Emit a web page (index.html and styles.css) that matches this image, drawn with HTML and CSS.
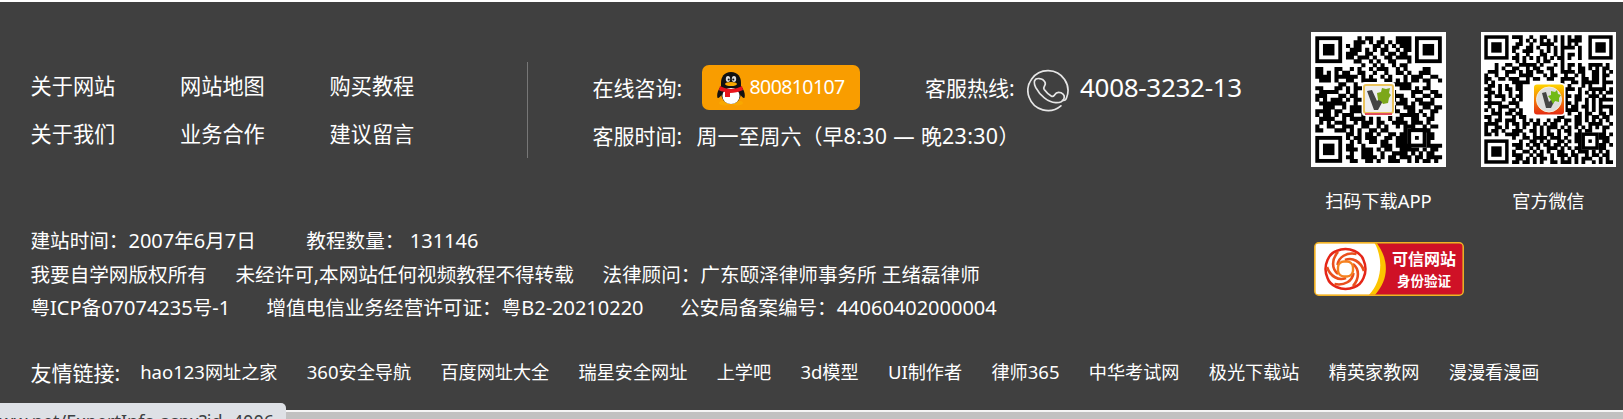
FILE: index.html
```html
<!DOCTYPE html>
<html lang="zh-CN">
<head>
<meta charset="utf-8">
<title>我要自学网</title>
<link rel="stylesheet" href="styles.css">
</head>
<body>
<footer class="footer">
  <div class="top">
    <div class="main">
      <div class="upper">
        <nav class="nav">
          <a>关于网站</a><a>网站地图</a><a>购买教程</a>
          <a>关于我们</a><a>业务合作</a><a>建议留言</a>
        </nav>
        <div class="contact">
          <div class="line">
            <span class="label">在线咨询:</span>
            <a class="qq">
              <svg class="penguin" viewBox="0 0 28 34">
                <ellipse cx="8" cy="31" rx="6" ry="2.4" fill="#f9a800"/><ellipse cx="20" cy="31" rx="6" ry="2.4" fill="#f9a800"/>
                <path d="M4 14C-1 20 0 26 1 26S4 24 5 22M24 14c5 6 4 12 3 12s-3-2-4-4" fill="#111"/>
                <path d="M14 0C7 0 4 5 4 11v9c0 7 4 12 10 12s10-5 10-12v-9C24 5 21 0 14 0Z" fill="#111"/>
                <ellipse cx="14" cy="24" rx="8.6" ry="8" fill="#fff"/>
                <ellipse cx="11" cy="7" rx="2.2" ry="3" fill="#ddd"/><ellipse cx="17" cy="7" rx="2.2" ry="3" fill="#ddd"/>
                <circle cx="11.7" cy="7.4" r="1" fill="#111"/><circle cx="16.3" cy="7.4" r="1" fill="#111"/>
                <ellipse cx="14" cy="12" rx="6" ry="2" fill="#f9a800"/>
                <path d="M3 14c7 4 15 4 22 0l1 4c-4 2-9 3-13 3v4H8v-5c-3-.6-5-1-6-2Z" fill="#e8141c"/>
              </svg>
              <span class="num">800810107</span>
            </a>
            <span class="label hot">客服热线:</span>
            <svg class="phone" viewBox="0 0 42 43" fill="none" stroke="#e6e6e6" stroke-width="1.7" stroke-linecap="round" stroke-linejoin="round">
              <path d="M33.9 36.8A20 20 0 1 1 39.5 29Q38.5 32 35.5 31.3"/>
              <path d="M8.6 10.3C10.5 9 14 9.4 16 10.8C18.3 12.6 18.8 15 17.5 16.9C16.5 18.4 16.2 19 17.2 20.5C19.3 23.4 21.7 25.5 24.5 27.2C26 28.1 26.5 27.5 27.5 26C29 23.6 31.5 22.8 34 23.8C36.8 25.2 38 27.5 36.8 30C35.6 32.6 32.5 33.9 28.6 33.7C21 33.1 12.8 26.4 8.8 18.7C7.2 15.4 6.6 12 8.6 10.3Z"/>
            </svg>
            <span class="tel">4008-3232-13</span>
          </div>
          <div class="line hours"><span class="label">客服时间:</span><span class="when">周一至周六（早<i class="num">8:30 — </i>晚<i class="num">23:30</i>）</span></div>
        </div>
      </div>
      <div class="info">
        <p><span>建站时间：<i class="num">2007</i>年<i class="num">6</i>月<i class="num">7</i>日</span><span class="g1">教程数量：</span><span class="num g2">131146</span></p>
        <p><span>我要自学网版权所有</span><span class="g3">未经许可,本网站任何视频教程不得转载</span><span class="g3">法律顾问：广东颐泽律师事务所 王绪磊律师</span></p>
        <p><span>粤<i class="num">ICP</i>备<i class="num">07074235</i>号<i class="num">-1</i></span><span class="g4">增值电信业务经营许可证：粤<i class="num">B2-20210220</i></span><span class="g4">公安局备案编号：<i class="num">44060402000004</i></span></p>
      </div>
    </div>
    <aside class="codes">
      <figure>
        <svg class="qr" id="qr-app" viewBox="0 0 135 135"></svg>
        <figcaption>扫码下载<i class="num">APP</i></figcaption>
      </figure>
      <figure>
        <svg class="qr" id="qr-wechat" viewBox="0 0 135 135"></svg>
        <figcaption>官方微信</figcaption>
      </figure>
      <svg class="trust" viewBox="0 0 150 54">
        <defs><clipPath id="badge"><rect x="1.2" y="1.2" width="147.6" height="51.6" rx="3"/></clipPath></defs>
        <g clip-path="url(#badge)">
          <rect width="150" height="54" fill="#cf1126"/>
          <path d="M0 0H62C75 17 76 37 60 54H0Z" fill="#fcc400"/>
          <path d="M0 0H60C70 17 68 40 54 54H0Z" fill="#fff"/>
        </g>
        <rect x=".8" y=".8" width="148.4" height="52.4" rx="4" fill="none" stroke="#f3b323" stroke-width="1.5"/>
        <g transform="translate(31.5 27)" fill="none">
          <path d="M-9-18Q0-22 9-18Q16-15 18-9Q22 0 18 9Q15 16 9 18Q0 22-9 18Q-16 15-18 9Q-22 0-18-9Q-15-16-9-18Z" stroke="#e52618" stroke-width="2.5"/>
          <g id="swirl" stroke="#ea4f1d" stroke-width="2.6"></g>
          <rect x="-7.5" y="-7.5" width="15" height="15" rx="6" fill="#fff" stroke="#f58220" stroke-width="2.4"/>
        </g>
        <text x="78" y="22.5" class="trust-a">可信网站</text>
        <text x="83" y="43.5" class="trust-b">身份验证</text>
      </svg>
    </aside>
  </div>
  <div class="links">
    <span class="label">友情链接:</span>
    <a class="first"><i class="num">hao123</i>网址之家</a><a><i class="num">360</i>安全导航</a><a>百度网址大全</a><a>瑞星安全网址</a><a>上学吧</a><a><i class="num">3d</i>模型</a><a><i class="num">UI</i>制作者</a><a>律师<i class="num">365</i></a><a>中华考试网</a><a>极光下载站</a><a>精英家教网</a><a>漫漫看漫画</a>
  </div>
</footer>
<div class="status"><span>www.net/ExpertInfo.aspx?id=4006</span></div>
<script src="qr.js"></script>
</body>
</html>
```

FILE: styles.css
```css
* { box-sizing: border-box; }
body {
  margin: 0;
  height: 419px;
  overflow: hidden;
  background: #c1c1c1;
  font-family: "Noto Sans", "Noto Sans CJK SC", sans-serif;
  color: #fff;
}
i { font-style: normal; }
p, figure { margin: 0; }
.num { font-size: 1.02em; }
.footer {
  height: 412px;
  background: #404040;
  border-top: 2px solid #fff;
  border-bottom: 2px solid #f5f5f5;
  white-space: nowrap;
}
.top { display: flex; height: 335px; }
.main { width: 1311px; padding: 60px 0 0 30.5px; }
.upper { display: flex; height: 96px; font-size: 21px; }
.nav {
  display: grid;
  grid-template-columns: repeat(3, 149.5px);
  grid-auto-rows: 48px;
  align-content: start;
  width: 497px;
  border-right: 1px solid #777;
  font-size: 21.2px;
  line-height: 48px;
}
.contact { padding: 3px 0 0 65px; }
.line { display: flex; align-items: center; height: 45px; }
.label { font-size: 21px; }
.contact .label { width: 109.5px; margin-top: -2px; }
.contact .hot { width: 102px; margin-left: 65px; }
.qq {
  display: flex;
  align-items: center;
  width: 158px;
  height: 45px;
  padding-left: 15px;
  border-radius: 7px;
  background: #f99d00;
}
.qq .num { margin: -3px 0 0 4.5px; font-size: 19.5px; letter-spacing: -0.03em; }
.penguin { width: 28px; height: 34px; margin-top: 3px; }
.phone { flex: none; width: 42px; height: 43px; margin-top: 6px; }
.tel { margin: -2px 0 0 11px; font-size: 26px; letter-spacing: -0.3px; }
.hours { height: 51px; }
.contact .hours .label { width: 104px; margin-top: -2px; }
.when { margin-top: -2px; }
.when .num { letter-spacing: 0.35px; }
.info { margin-top: 66px; font-size: 19.6px; line-height: 33.6px; }
.info p { display: flex; height: 33.6px; }
.g1 { margin-left: 50.5px; }
.g2 { margin-left: 5.5px; }
.g3 { margin-left: 28.6px; }
.g4 { margin-left: 36.4px; }
.codes {
  display: grid;
  grid-template-columns: 135px 135px;
  column-gap: 35px;
  grid-template-rows: 210px 54px;
  padding-top: 30px;
}
.qr { display: block; width: 135px; height: 135px; background: #fff; }
figcaption { padding-top: 18px; text-align: center; font-size: 18.1px; line-height: 32px; }
.trust { width: 150px; height: 54px; margin-left: 3px; }
.trust text { fill: #fff; font-family: "Noto Sans CJK SC", sans-serif; font-weight: 700; }
.trust-a { font-size: 16px; }
.trust-b { font-size: 13.5px; }
.links { display: flex; align-items: center; height: 73px; padding: 0 0 3px 30.5px; font-size: 18.15px; }
.links a { margin: -2px 0 0 29.3px; }
.links .first { margin-left: 20px; }
.status {
  position: absolute;
  left: 0;
  top: 403px;
  width: 286px;
  height: 16px;
  overflow: hidden;
  border-radius: 0 5px 0 0;
  background: #dee1e6;
  color: #3c4043;
  font-size: 18px;
  line-height: 24px;
  white-space: nowrap;
}
.status span { position: absolute; right: 12px; top: 6px; }
```

FILE: qr.js
```js
const NS = 'http://www.w3.org/2000/svg';
function add(parent, tag, attrs) {
  const e = document.createElementNS(NS, tag);
  for (const k in attrs) e.setAttribute(k, attrs[k]);
  parent.appendChild(e);
  return e;
}
function drawCode(id, rows, x0, size, align) {
  const svg = document.getElementById(id);
  const n = rows.length, m = size / n;
  let d = '';
  rows.forEach((row, y) => {
    [...row].forEach((c, x) => {
      const corner = (x < 8 && y < 8) || (x > n - 9 && y < 8) || (x < 8 && y > n - 9);
      if (c === '#' && !corner) d += `M${x0 + x * m} ${x0 + y * m}h${m + .3}v${m + .3}h-${m + .3}z`;
    });
  });
  add(svg, 'path', { d });
  const ring = (x, y, w) => {
    [[w, '#000'], [w - 2, '#fff'], [w - 4, '#000']].forEach(([s, fill], i) =>
      add(svg, 'rect', { x: x0 + (x + i) * m, y: x0 + (y + i) * m, width: s * m, height: s * m, fill }));
  };
  ring(0, 0, 7); ring(n - 7, 0, 7); ring(0, n - 7, 7);
  ring(align, align, 5);
  return svg;
}
const app = [
  '...........#.##..#...####........',
  '..........###.#.##.#.####........',
  '........#.##...##.#.#.###........',
  '.........###.#.#.##..#.##........',
  '........###..##..#.##.##.........',
  '........##.###.#..##.####........',
  '..........##..#.#..##...#........',
  '............#..#.#..#.##.........',
  '##...##..#.#..#.###..#.#....##...',
  '##.#.#.##..##..#..#..##.#..###...',
  '####.######.#.#..#.#...#.###..##.',
  '.###.#..##..####..##.#.#.##.##..#',
  '......##..#..#....#.#####....#...',
  '##...##.#.###......#..###.#.##...',
  '.#####..#.#.........#....###..##.',
  '###...##.##.........###..#..##.##',
  '#.#.###.#.##........#.##..##..#..',
  '.#######..#..........###.#.####..',
  '..###..#.###........#..###..##.##',
  '####.##..###........##..##.#..##.',
  '#.##.#.###..#......#..#####.#.#..',
  '.####..#.####.#.#..#.##..##..##..',
  '.#.#.###..#.###.##..####.###.#...',
  '#..##..###..##..#.#..#.###..#.##.',
  '##...###.#.#..##.##....#.#####...',
  '........##.#.##.#..##.##.....##..',
  '........#.##.###..##.###.....##..',
  '.........#.#..##.##..###.....#...',
  '........##..#....###.####....####',
  '........###.###.#.##..#####.#.##.',
  '.........#..###..#..####.#.#.##..',
  '........##..####.#.##.###.##.####',
  '.........##..##.#..###..#.#.##.#.'
];
const wechat = [
  '........###..#..##..#.#.#.##.........',
  '..........#.#.#.#.#.#.#.####.........',
  '.........##..#..####..#.#.#..........',
  '........##..##.#..#.#.####.#.........',
  '........#..###..#.#.#.#....#.........',
  '.........#..#...##..#.#.##.#.........',
  '........##.#.#.#.#.#.##.#..#.........',
  '.........#.#...#.##...#..............',
  '...#..##..#####.#...#.#.##.#..####.#.',
  '...#.#..##..#.##..##..#.#..##.#.#.##.',
  '.###..###.#.##.##..#..####.##..##.#.#',
  '#..#..#...####...#.##..#..#.#..##.##.',
  '##..##.###..#.##..##..####..##.##.#..',
  '#.#.....#####.........#..##.#####.###',
  '.##.#.#..##.............#...#.#...#..',
  '##..#.##.##............###.#..#####.#',
  '.##.#..#..#............#...#.#.#.#.##',
  '##.###.#.##............##.##..###.#..',
  '.#...#..#.#............#..##.#.#.####',
  '#####..###.............##.#..#.#.#...',
  '.#..###..#.............#.##.##.#.####',
  '#.#.#..##.#............####..#.#.#..#',
  '..###.##.##...........#.#..#.##..##.#',
  '##..#...#.##.........##...##.#.##.##.',
  '.#.##.###..#.#.#..#.##.##.##.#.#.#.#.',
  '####..#.##.##.##.#.##..#..##..####..#',
  '#..##.#..#.#..#.#.###.#.#.#.#.#.#.##.',
  '#.##.#..###..##.#.#..#.##..#.##...#..',
  '##.#..####.#..#.#.##.#..#.##.....##.#',
  '........#..##.####.###.#..##.....###.',
  '..........#..##.#.#..##.#.##......##.',
  '........###.#.##.##.##.#...#.....##.#',
  '.........##..#.#..###.#.#.##.....##..',
  '........#..##.#.#.#..##..#.###.#.#.#.',
  '........###..#.##..#.###.##..#.##.##.',
  '.........##.#.#.##.#..#.#.#.###..#.#.',
  '........##.##.#.#..##.###.#.#..#.#.##'
];
const a = drawCode('qr-app', app, 4.3, 126.5, 24);
add(a, 'rect', { x: 51, y: 50, width: 33, height: 34, rx: 3, fill: '#fff' });
add(a, 'rect', { x: 53, y: 53, width: 29, height: 28, rx: 2, fill: '#eee', stroke: '#ebc45d', 'stroke-width': 2 });
add(a, 'path', { d: 'M54 82H81', stroke: '#e34d5b', 'stroke-width': 2 });
add(a, 'path', { d: 'M56 59l5-1 5 11 6-6 1 4-6 11h-4z', fill: '#444' });
add(a, 'path', { d: 'M66 61l4-1 1-4 4 1 4-1-1 5 2 2-2 3-1 5-5 1-2-3-3-1z', fill: '#7ca719' });
const w = drawCode('qr-wechat', wechat, 3.3, 128.4, 28);
const grad = add(add(w, 'defs', {}), 'linearGradient', { id: 'sun', x1: 0, y1: 0, x2: 0, y2: 1 });
add(grad, 'stop', { offset: 0, 'stop-color': '#ffd500' });
add(grad, 'stop', { offset: 1, 'stop-color': '#e52a12' });
add(w, 'rect', { x: 51.5, y: 51, width: 33, height: 33, rx: 4, fill: '#fff' });
add(w, 'rect', { x: 53, y: 52.5, width: 30, height: 30, rx: 3, fill: 'url(#sun)' });
add(w, 'circle', { cx: 68, cy: 67.5, r: 12.5, fill: '#ddd', stroke: '#f6efdc' });
add(w, 'path', { d: 'M61 61l4-1 3 10 4-4 2 2-4 8h-5z', fill: '#444' });
add(w, 'path', { d: 'M67 64l3-1v-4l4 1 2-2 1 4 3 1-2 3v4l-4-1-2 3-2-4z', fill: '#72ba16' });
const swirl = document.getElementById('swirl');
for (let k = 0; k < 6; k++) {
  add(swirl, 'path', { d: 'M-8 -4C-7 -12 1 -17 11 -15', transform: `rotate(${k * 60})` });
}
```
